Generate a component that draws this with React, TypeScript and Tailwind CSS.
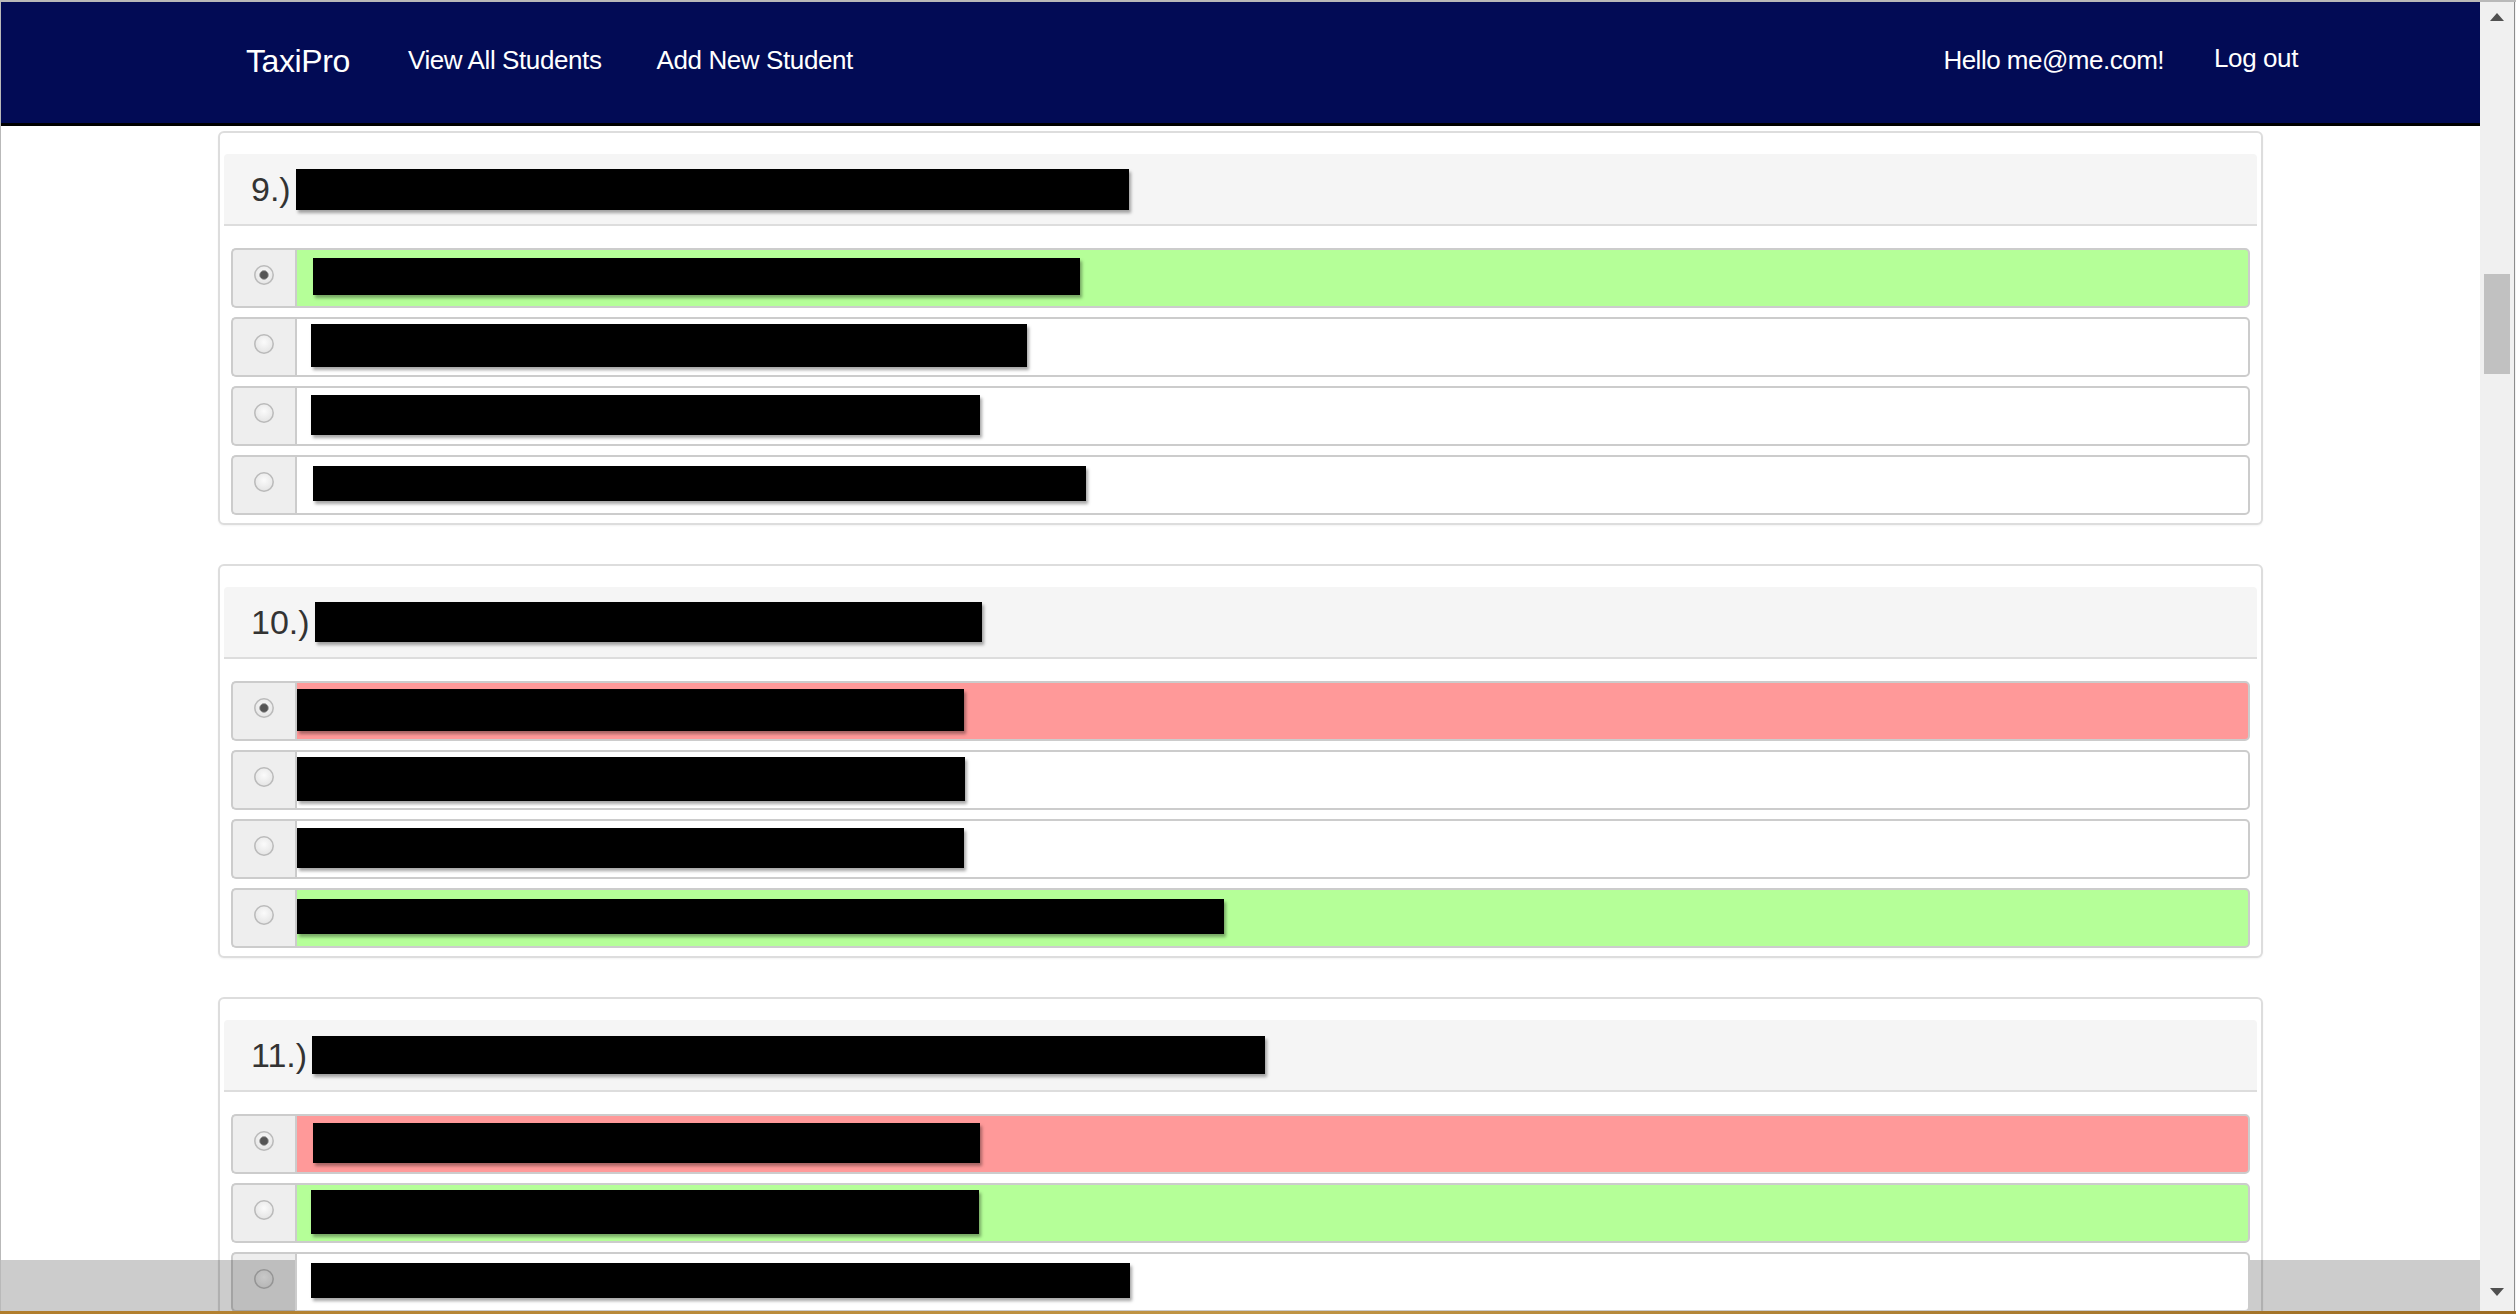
import React from 'react'

type Tone = 'green' | 'red' | 'white'

type Option = {
  checked?: boolean
  tone: Tone
  pad: string
  box: string
}

type Question = {
  label: string
  head: string
  options: Option[]
}

const questions: Question[] = [
  {
    label: '9.)',
    head: 'w-[833px] h-[41px]',
    options: [
      { checked: true, tone: 'green', pad: 'pl-[16px]', box: 'w-[767px] h-[37px]' },
      { tone: 'white', pad: 'pl-[14px]', box: 'w-[716px] h-[43px]' },
      { tone: 'white', pad: 'pl-[14px]', box: 'w-[669px] h-[40px]' },
      { tone: 'white', pad: 'pl-[16px]', box: 'w-[773px] h-[35px]' },
    ],
  },
  {
    label: '10.)',
    head: 'w-[667px] h-[40px]',
    options: [
      { checked: true, tone: 'red', pad: 'pl-0', box: 'w-[667px] h-[42px]' },
      { tone: 'white', pad: 'pl-0', box: 'w-[668px] h-[44px]' },
      { tone: 'white', pad: 'pl-0', box: 'w-[667px] h-[40px]' },
      { tone: 'green', pad: 'pl-0', box: 'w-[927px] h-[35px]' },
    ],
  },
  {
    label: '11.)',
    head: 'w-[953px] h-[38px]',
    options: [
      { checked: true, tone: 'red', pad: 'pl-[16px]', box: 'w-[667px] h-[40px]' },
      { tone: 'green', pad: 'pl-[14px]', box: 'w-[668px] h-[44px]' },
      { tone: 'white', pad: 'pl-[14px]', box: 'w-[819px] h-[35px]' },
    ],
  },
]

const toneClass: Record<Tone, string> = {
  green: 'bg-[#b5ff98]',
  red: 'bg-[#ff9999]',
  white: 'bg-white',
}

function Radio({ checked }: { checked?: boolean }) {
  return (
    <svg width="22" height="22" viewBox="0 0 22 22">
      <defs>
        <radialGradient id="rg" cx="50%" cy="40%" r="60%">
          <stop offset="0%" stopColor="#fbfbfb" />
          <stop offset="100%" stopColor="#e4e4e4" />
        </radialGradient>
      </defs>
      <circle cx="11" cy="11" r="9.2" fill="url(#rg)" stroke="#bababa" strokeWidth="1.5" />
      {checked && <circle cx="11" cy="11" r="4.4" fill="#555555" stroke="#a0a0a0" strokeWidth="0.8" />}
    </svg>
  )
}

function Redacted({ size }: { size: string }) {
  return <div className={`${size} shrink-0 bg-black shadow-[2px_3px_3px_rgba(0,0,0,0.35)]`} />
}

function OptionRow({ option }: { option: Option }) {
  return (
    <div className="flex h-[60px]">
      <div className="w-[64px] shrink-0 bg-[#eeeeee] border-2 border-r-0 border-[#cccccc] rounded-l-[5px] flex items-center justify-center pb-[6px]">
        <Radio checked={option.checked} />
      </div>
      <div
        className={`relative z-[2] flex-1 min-w-0 border-2 border-[#cccccc] rounded-r-[5px] flex items-center pb-[3px] ${toneClass[option.tone]} ${option.pad}`}
      >
        <Redacted size={option.box} />
      </div>
    </div>
  )
}

function QuestionCard({ question }: { question: Question }) {
  return (
    <div className="border-2 border-[#dddddd] rounded-[6px] bg-white px-[4px] pt-[21px] pb-[8px] shadow-[0_1px_2px_rgba(0,0,0,0.05)]">
      <div className="h-[72px] bg-[#f5f5f5] border-b-2 border-[#dddddd] rounded-t-[4px] flex items-center pl-[27px] gap-[5px]">
        <span className="text-[34px] leading-none text-[#333333]">{question.label}</span>
        <Redacted size={question.head} />
      </div>
      <div className="mt-[22px] px-[7px] flex flex-col gap-[9px]">
        {question.options.map((option, i) => (
          <OptionRow key={i} option={option} />
        ))}
      </div>
    </div>
  )
}

function Arrow({ up }: { up?: boolean }) {
  return (
    <svg width="14" height="8" viewBox="0 0 14 8">
      <polygon points={up ? '7,0 14,8 0,8' : '0,0 14,0 7,8'} fill="#505050" />
    </svg>
  )
}

export default function App() {
  return (
    <div className="h-screen w-screen overflow-hidden flex flex-col bg-white font-['Liberation_Sans',Arial,sans-serif]">
      <div className="h-[2px] shrink-0 bg-[#b9b9b9]" />
      <div className="flex flex-1 min-h-0">
        <div className="w-px shrink-0 bg-[#b9b9b9]" />
        <div className="relative flex-1 min-w-0 overflow-hidden flex flex-col">
          <nav className="h-[124px] shrink-0 bg-[#020b55] border-b-[3px] border-black flex items-center justify-between pl-[245px] pr-[182px] pb-[4px] text-white">
            <div className="flex items-center">
              <span className="text-[32px] tracking-[-0.4px]">TaxiPro</span>
              <a className="ml-[58px] text-[26px] tracking-[-0.4px]">View All Students</a>
              <a className="ml-[55px] text-[26px] tracking-[-0.4px]">Add New Student</a>
            </div>
            <div className="flex items-center">
              <span className="text-[26px] tracking-[-0.5px]">Hello me@me.com!</span>
              <a className="ml-[50px] text-[26px] tracking-[-0.4px] mb-[4px]">Log out</a>
            </div>
          </nav>
          <div className="pt-[5px] flex justify-center">
            <div className="w-[2045px] flex flex-col gap-[39px]">
              {questions.map((q) => (
                <QuestionCard key={q.label} question={q} />
              ))}
            </div>
          </div>
          <div className="absolute bottom-0 left-0 right-0 h-[51px] bg-black/20 z-[1]" />
        </div>
        <div className="w-[34px] shrink-0 bg-[#f0f0f0] flex flex-col">
          <div className="h-[30px] flex items-center justify-center">
            <Arrow up />
          </div>
          <div className="mt-[242px] mx-[4px] h-[100px] bg-[#c1c1c1]" />
          <div className="flex-1" />
          <div className="h-[38px] flex items-center justify-center">
            <Arrow />
          </div>
        </div>
        <div className="w-[2px] shrink-0 bg-[#f4f4f4] border-l border-[#8c8c8c]" />
      </div>
      <div className="h-[3px] shrink-0 bg-gradient-to-r from-[#b07d2c] via-[#c09545] to-[#9c6c22]" />
    </div>
  )
}
